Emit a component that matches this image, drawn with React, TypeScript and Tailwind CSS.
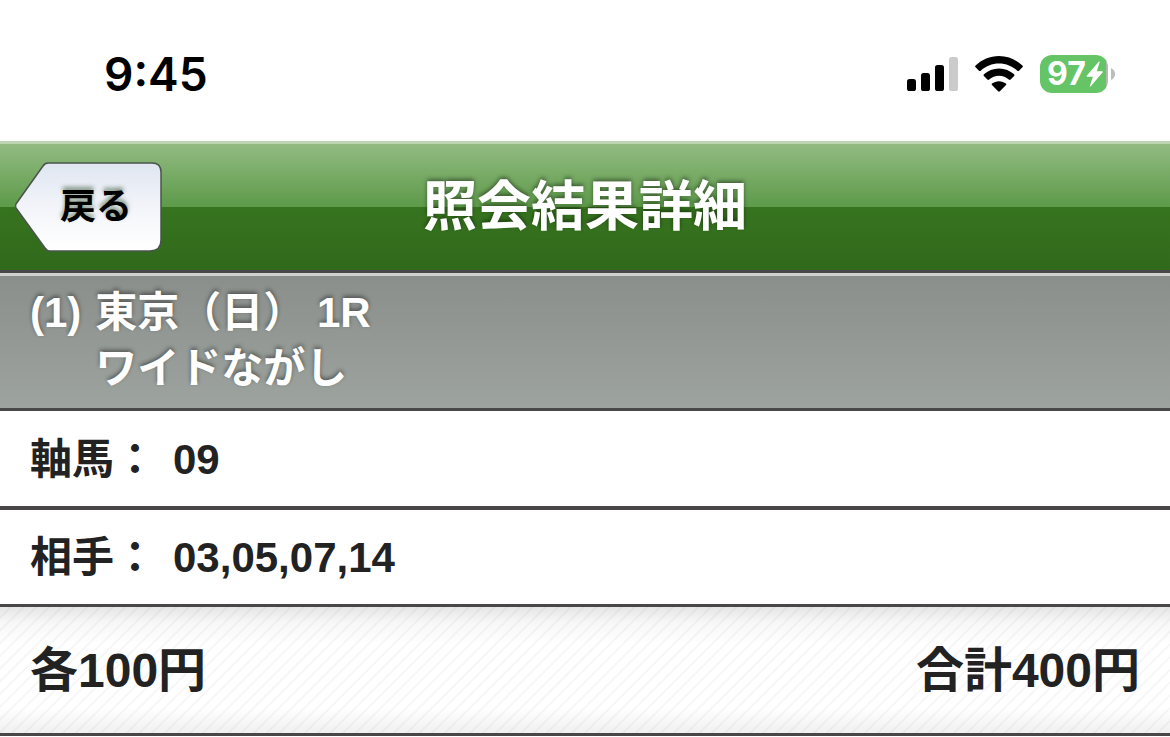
function Signal() {
  return (
    <svg className="h-[36px] w-[52px]" viewBox="0 0 52 36" role="img" aria-label="signal">
      <rect x="1" y="23" width="9" height="12" rx="2.6" />
      <rect x="15" y="17" width="9" height="18" rx="2.6" />
      <rect x="29" y="9" width="9" height="26" rx="2.6" />
      <rect x="43" y="1" width="9" height="34" rx="2.6" fill="#cbcbcb" />
    </svg>
  );
}

function Wifi() {
  return (
    <svg className="h-[36px] w-[48px]" viewBox="0 0 48 36" role="img" aria-label="wifi">
      <path d="M24 0C15 0 6.700 3.600 .600 9.500Q-.300 10.400 .600 11.300L4 14.700Q4.800 15.500 5.700 14.700C10.600 10.200 17 7.500 24 7.500S37.400 10.200 42.300 14.700Q43.200 15.500 44 14.700L47.400 11.300Q48.300 10.400 47.400 9.500C41.300 3.600 33 0 24 0Z" />
      <path d="M24 12.400C18.200 12.400 12.900 14.600 8.900 18.200Q8 19.100 8.900 20L12.400 23.500Q13.200 24.300 14.200 23.500C16.800 21.200 20.200 19.700 24 19.700S31.200 21.200 33.800 23.500Q34.800 24.300 35.600 23.500L39.100 20Q40 19.100 39.100 18.200C35.100 14.600 29.800 12.400 24 12.400Z" />
      <path d="M24 25.200C21.300 25.200 18.900 26.100 17 27.600Q16.300 28.300 17 29L23.100 35.300Q24 36.100 24.900 35.300L31 29Q31.700 28.300 31 27.600C29.100 26.100 26.700 25.200 24 25.200Z" />
    </svg>
  );
}

function Battery() {
  return (
    <div className="flex items-center gap-[3px]">
      <div className="flex h-[38px] w-[68px] items-center overflow-hidden rounded-[12px] bg-gradient-to-r from-[#64c466] from-[66px] to-[#b4b7b4] to-[66px] pl-[7px] text-white">
        <span className="font-['Inter',sans-serif] text-[32px] leading-[38px] font-bold">97</span>
        <svg className="h-[26px] w-[18px] shrink-0" viewBox="0 0 18 26" fill="currentColor" aria-hidden="true">
          <path d="M12.700 .800Q14.100 -.200 13.600 1.400L10.800 10.200H16Q17.400 10.400 16.500 11.600L4.800 25.200Q3.400 26.200 4 24.600L6.900 15.800H1.400Q0 15.600 .900 14.400Z" />
        </svg>
      </div>
      <svg className="h-[12px] w-[4px]" viewBox="0 0 4 12" fill="#bcbcbc" aria-hidden="true">
        <path d="M0 0Q4 2 4 6T0 12Z" />
      </svg>
    </div>
  );
}

function StatusBar() {
  return (
    <div className="flex h-[141px] items-center justify-between bg-white pt-[6px] pr-[55px] pl-[104px] text-black">
      <time className="font-['Inter',sans-serif] text-[46px] leading-[56px] font-semibold">9:45</time>
      <div className="flex items-center gap-[17px]">
        <Signal />
        <Wifi />
        <Battery />
      </div>
    </div>
  );
}

function BackButton() {
  return (
    <button type="button" className="relative flex h-[90px] w-[148px] items-center pl-[46px] text-[36px] leading-[48px] font-bold text-black">
      <svg className="absolute inset-0 h-full w-full" viewBox="0 0 148 90" aria-hidden="true">
        <defs>
          <linearGradient id="back" x1="0" y1="0" x2="0" y2="1">
            <stop offset="0" stopColor="#dfe6f1" />
            <stop offset=".6" stopColor="#f6f7fb" />
            <stop offset="1" stopColor="#ffffff" />
          </linearGradient>
        </defs>
        <path d="M34 1H138Q147 1 147 10V78Q147 89 136 89H36Q33 89 31 86L2 46Q1 44 2 42L29 4Q31 1 34 1Z" fill="url(#back)" stroke="#4a544c" strokeWidth="1.500" />
      </svg>
      <span className="relative [text-shadow:0_-3px_4px_rgba(50,80,50,0.6)]">戻る</span>
    </button>
  );
}

function Row({ label, value }: { label: string; value: string }) {
  return (
    <div className="flex items-center gap-[17px] px-[30px] pt-[2px] text-[42px] leading-[56px]">
      <dt>{label}</dt>
      <dd>{value}</dd>
    </div>
  );
}

export default function App() {
  return (
    <div className="min-h-screen bg-white font-['Liberation_Sans','Noto_Sans_CJK_JP',sans-serif] font-bold text-[#222222]" lang="ja">
      <StatusBar />
      <header className="grid h-[132px] grid-cols-[1fr_auto_1fr] items-center border-t-[3px] border-b-[3px] border-t-[#bfd6b5] border-b-[#484848] bg-[linear-gradient(#92bb82_0%,#5d9a49_50%,#37741f_50%,#30691b_100%)] px-[14px]">
        <BackButton />
        <h1 className="text-[54px] leading-[72px] text-white [text-shadow:0_-2px_4px_rgba(0,0,0,0.45)]">照会結果詳細</h1>
      </header>
      <main>
        <h2 className="flex h-[138px] gap-[14px] border-t-[3px] border-b-[3px] border-t-[#ced3d0] border-b-[#484848] bg-gradient-to-b from-[#8a8f8c] to-[#9da39f] px-[30px] pt-[9px] text-[42px] leading-[56px] text-white [text-shadow:0_-2px_4px_rgba(0,0,0,0.45)]">
          <span>(1)</span>
          <span>
            東京（日） 1R
            <br />
            ワイドながし
          </span>
        </h2>
        <dl>
          <div className="flex h-[99px] items-center border-b-[4px] border-[#484646]">
            <Row label="軸馬：" value="09" />
          </div>
          <div className="flex h-[97px] items-center border-b-[3px] border-[#484646]">
            <Row label="相手：" value="03,05,07,14" />
          </div>
        </dl>
        <div className="flex h-[129px] items-center justify-between border-b-[3px] border-[#484646] bg-[linear-gradient(rgba(0,0,0,0.1),rgba(0,0,0,0.03)_12%,transparent_30%,transparent_80%,rgba(0,0,0,0.06)),repeating-linear-gradient(135deg,#ffffff_0px,#ffffff_6px,#f4f4f4_8px,#ffffff_9px)] px-[30px] pt-[2px] text-[48px] leading-[64px]">
          <span>各100円</span>
          <span>合計400円</span>
        </div>
      </main>
    </div>
  );
}
